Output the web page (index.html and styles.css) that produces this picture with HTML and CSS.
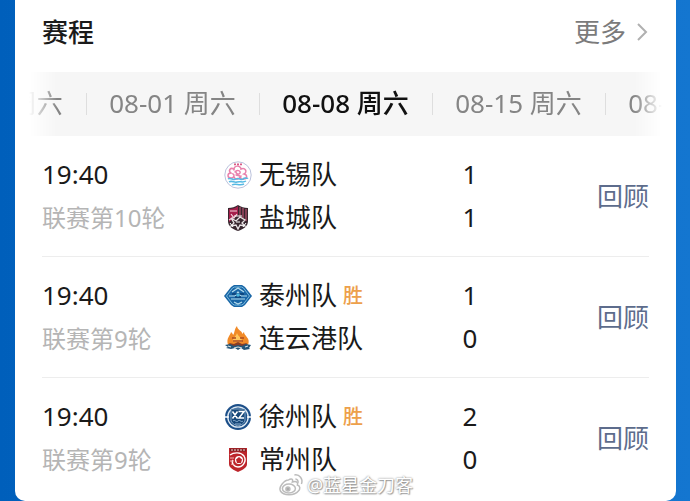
FILE: index.html
```html
<!DOCTYPE html>
<html lang="zh-CN">
<head>
  <meta charset="UTF-8">
  <meta name="viewport" content="width=device-width, initial-scale=1">
  <title>赛程</title>
  <link rel="stylesheet" href="styles.css">
</head>
<body>
  <main class="card">
    <header class="card-header">
      <h1>赛程</h1>
      <a href="#" class="more">更多
        <svg class="chevron" viewBox="0 0 12 20" aria-hidden="true"><path d="M2 2l8 8-8 8"/></svg>
      </a>
    </header>

    <!-- 日期切换 -->
    <nav class="dates">
      <button type="button" class="date">07-25 周六</button>
      <button type="button" class="date">08-01 周六</button>
      <button type="button" class="date active">08-08 周六</button>
      <button type="button" class="date">08-15 周六</button>
      <button type="button" class="date">08-22 周六</button>
    </nav>

    <!-- 比赛列表 -->
    <section class="matches">
      <article class="match">
        <div class="info">
          <time>19:40</time>
          <span class="round">联赛第10轮</span>
        </div>
        <div class="teams">
          <div class="team">
            <svg class="logo" viewBox="0 0 28 28" aria-hidden="true">
              <circle cx="14" cy="14" r="13.2" fill="#fff" stroke="#a9b3d3" stroke-width=".8"/>
              <path d="M10 3.4h2m1 0h2m1 0h2" stroke="#d75b86" stroke-width="1.6"/>
              <g fill="none" stroke="#e982ad" stroke-width="1.5" stroke-linecap="round">
                <path d="M10 9c-1-5 7-5 7-1 4-2 7 3 3 5 4 1 3 5 0 5-3 1-4-1-3-3"/>
                <path d="M10 8c-4-2-6 2-3 4-4 0-4 5 0 5 3 0 4-3 2-4"/>
                <path d="M11 11c2-3 6-1 5 1s-4 1-4-1m-2 5c1 3 5 3 6 0m-4-2l4 1"/>
              </g>
              <path d="M4 18c3-2 5 2 8 0s5 2 7 0 4 0 5-1M5 21c3-2 5 1 8 0s6 1 9-1M8 24c3-2 8 1 12-1" fill="none" stroke="#55b9e3" stroke-width="1.5"/>
            </svg>
            <span class="name">无锡队</span>
          </div>
          <div class="team">
            <svg class="logo" viewBox="0 0 28 28" aria-hidden="true">
              <path d="M4 4c4 0 7-1 10-3 3 2 6 3 10 3v13c0 5-4 8-10 10C8 25 4 22 4 17z" fill="#38272f"/>
              <path d="M5 5c4 0 7-1 9-3v9L5 18z" fill="#a61f4c"/>
              <path d="M6 7h7M7 10l3 4 3-4M5 16l5-3" stroke="#f3d4dc" stroke-width="1.2" fill="none"/>
              <path d="M16 3v10M19 4v10M22 5v12" stroke="#d05a7c" stroke-width="1"/>
              <path d="M7 14l5 3 4-4 5 3-3 3 3 3-5-1-2 4-2-4-5 1 3-3z" fill="none" stroke="#e9e3e5" stroke-width="1.3"/>
              <path d="M10 12h8M12 18h4M6 19l3 4m13-4l-3 4" stroke="#fff"/>
            </svg>
            <span class="name">盐城队</span>
          </div>
        </div>
        <div class="scores"><span>1</span><span>1</span></div>
        <a href="#" class="review">回顾</a>
      </article>

      <article class="match">
        <div class="info">
          <time>19:40</time>
          <span class="round">联赛第9轮</span>
        </div>
        <div class="teams">
          <div class="team">
            <svg class="logo" viewBox="0 0 28 28" aria-hidden="true">
              <path d="M0 14l7-9 3-2h8l3 2 7 9-7 9-3 2h-8l-3-2z" fill="#1966a6"/>
              <path d="M2.500 14l6-8 2-1h7l2 1 6 8-6 8-2 1h-7l-2-1z" fill="none" stroke="#79b9dc" stroke-width="1"/>
              <path d="M8 10l6-4 6 4M5 14h6l3-4 3 4h6M7 17h14M10 20l4 2 4-2" fill="none" stroke="#b6dded" stroke-width="1.2"/>
              <path d="M8 12h12M11 15h6" stroke="#0b3f77" stroke-width="1.5"/>
              <circle cx="14" cy="13" r="1.8" fill="#4bb6df"/>
            </svg>
            <span class="name">泰州队</span>
            <span class="win">胜</span>
          </div>
          <div class="team">
            <svg class="logo" viewBox="0 0 28 28" aria-hidden="true">
              <path d="M4 20C2 13 6 11 7 7c1 1 2 2 2 3 2-2 1-6 4-9 0 4 6 5 5 8l2-2c0 4 7 6 4 13z" fill="#f18a27"/>
              <path d="M9 17c-1-4 3-5 4-9 1 4 6 5 5 9z" fill="#ffc65c"/>
              <path d="M8 13h4m4 0h4M9 16h10" stroke="#ad4b20" stroke-width="1.6"/>
              <path d="M5 18l5 1 4-2 4 2 5-1-2 4H7z" fill="#883e27"/>
              <path d="M1 20l5-1 4 2 4-1 4 1 4-2 5 1-2 3 1 1-6 1-3-2-3 2-3-2-4 1-5-1 2-1z" fill="#245477"/>
              <path d="M4 21l3 1m3 1l4-1 4 1m3-1l3-1" stroke="#d6e2e5" stroke-width="1.2"/>
            </svg>
            <span class="name">连云港队</span>
          </div>
        </div>
        <div class="scores"><span>1</span><span>0</span></div>
        <a href="#" class="review">回顾</a>
      </article>

      <article class="match">
        <div class="info">
          <time>19:40</time>
          <span class="round">联赛第9轮</span>
        </div>
        <div class="teams">
          <div class="team">
            <svg class="logo" viewBox="0 0 28 28" aria-hidden="true">
              <circle cx="14" cy="14" r="13" fill="#1c4f89"/>
              <circle cx="14" cy="14" r="10.2" fill="none" stroke="#dfeaf3" stroke-width="1.3"/>
              <path d="M0 14h5m18 0h5" stroke="#fff" stroke-width="1.5"/>
              <path d="M7 6h14v11c0 3-4 5-7 6-3-1-7-3-7-6z" fill="#174779" stroke="#9dbbd6" stroke-width=".8"/>
              <path d="M8.500 8.500l5 7m0-7l-5 7m6-7H20l-5 6.500h5" fill="none" stroke="#fff" stroke-width="1.5"/>
              <path d="M9 18c2-2 3 2 5 0s3 2 5 0M11 21h6" fill="none" stroke="#8eb2d4"/>
            </svg>
            <span class="name">徐州队</span>
            <span class="win">胜</span>
          </div>
          <div class="team">
            <svg class="logo" viewBox="0 0 28 28" aria-hidden="true">
              <path d="M5 2h18v16c0 4-5 6-9 8-4-2-9-4-9-8z" fill="#bd252b"/>
              <path d="M6 4h16" stroke="#7e2025" stroke-width="3"/>
              <path d="M7 4h2m1 0h2m1 0h2m1 0h2m1 0h2" stroke="#f5d5d1" stroke-width="1.200"/>
              <path d="M6 9c4-3 11-3 14 1 3 5-1 11-6 11-4 0-7-4-5-7" fill="none" stroke="#fff" stroke-width="1.4"/>
              <circle cx="15" cy="14" r="4" fill="#fff"/>
              <path d="M15 11l3 2.500-1 3.500h-4l-1-3.500z" fill="#bd252b"/>
              <path d="M6 12h4M6 15h3M7 18l3 1" stroke="#f3b7b5"/>
            </svg>
            <span class="name">常州队</span>
          </div>
        </div>
        <div class="scores"><span>2</span><span>0</span></div>
        <a href="#" class="review">回顾</a>
      </article>
    </section>

    <!-- 水印 -->
    <div class="watermark">
      <svg class="weibo" viewBox="0 0 26 24" aria-hidden="true">
        <path d="M10 7c3-2 5-1 4 2 4-1 6 0 5 3 3 1 3 4 1 6-4 5-15 5-18 0C0 14 6 7 10 7z"/>
        <ellipse cx="10.500" cy="15.500" rx="6.500" ry="4.500"/>
        <circle class="dot" cx="9.500" cy="16" r="2"/>
        <path d="M16 2c5-1 9 4 7 9M17 6c2 0 3 2 2.500 4"/>
      </svg>
      <span>@蓝星金刀客</span>
    </div>
  </main>
</body>
</html>
```
FILE: styles.css
```css
* {
  box-sizing: border-box;
  margin: 0;
  padding: 0;
}

body {
  min-height: 100vh;
  padding: 0 14px 0 15px;
  font-family: "Noto Sans", "Noto Sans CJK SC", sans-serif;
  font-size: 26px;
  color: #1a1a1a;
  background: linear-gradient(90deg, #005fbb, #1476d0);
}

a {
  color: inherit;
  text-decoration: none;
}

.card {
  position: relative;
  padding-bottom: 3px;
  background: #fff;
  border-radius: 0 0 10px 10px;
}

.card-header {
  display: flex;
  justify-content: space-between;
  align-items: center;
  height: 72px;
  padding: 0 28px 8px 27px;
  line-height: 32px;
}

h1 {
  font-size: 26px;
  font-weight: 500;
}

.more {
  display: flex;
  align-items: center;
  gap: 10px;
  color: #7b7b7b;
}

.chevron {
  width: 12px;
  height: 20px;
  fill: none;
  stroke: #b0b0b0;
  stroke-width: 2;
}

/* 日期栏，两侧渐隐 */
.dates {
  display: flex;
  justify-content: center;
  height: 64px;
  margin: 0 14px;
  overflow: hidden;
  background: #f6f6f6;
  -webkit-mask-image: linear-gradient(90deg, transparent, #000 28px, #000 calc(100% - 28px), transparent);
  mask-image: linear-gradient(90deg, transparent, #000 28px, #000 calc(100% - 28px), transparent);
}

.date {
  display: flex;
  flex: 0 0 173px;
  justify-content: center;
  align-items: center;
  padding-bottom: 2px;
  border: none;
  background: linear-gradient(#dedede, #dedede) no-repeat left center / 1px 22px;
  font: inherit;
  line-height: 32px;
  color: #858585;
  white-space: nowrap;
  cursor: pointer;
}

.date.active {
  font-weight: 500;
  color: #111;
}

.matches {
  padding: 0 27px;
}

.match {
  display: grid;
  grid-template-columns: 30% 1fr 20px 169px;
  align-items: center;
  padding: 17px 0;
  line-height: 43px;
  border-bottom: 1px solid #ededed;
}

.match:last-child {
  border-bottom: none;
}

.info,
.scores {
  display: flex;
  flex-direction: column;
}

.round {
  font-size: 24px;
  color: #b5b5b5;
}

.team {
  display: flex;
  align-items: center;
  height: 43px;
}

.logo {
  width: 28px;
  height: 28px;
  margin-right: 7px;
}

.win {
  margin-left: 6px;
  font-size: 20px;
  font-weight: 500;
  color: #eda04b;
}

.scores {
  text-align: center;
}

.review {
  text-align: right;
  color: #5d6c8c;
}

.watermark {
  position: absolute;
  bottom: 4px;
  left: 50%;
  display: flex;
  align-items: center;
  gap: 3px;
  transform: translateX(-50%);
  font-size: 18px;
  line-height: 24px;
  color: #fff;
  white-space: nowrap;
  text-shadow: 0 0 2px #777, 1px 1px 1px #aaa;
}

.weibo {
  width: 26px;
  height: 24px;
  fill: #fff;
  stroke: #bcbcbc;
  stroke-width: 1.5;
}

.weibo .dot {
  fill: #aaa;
}
```
